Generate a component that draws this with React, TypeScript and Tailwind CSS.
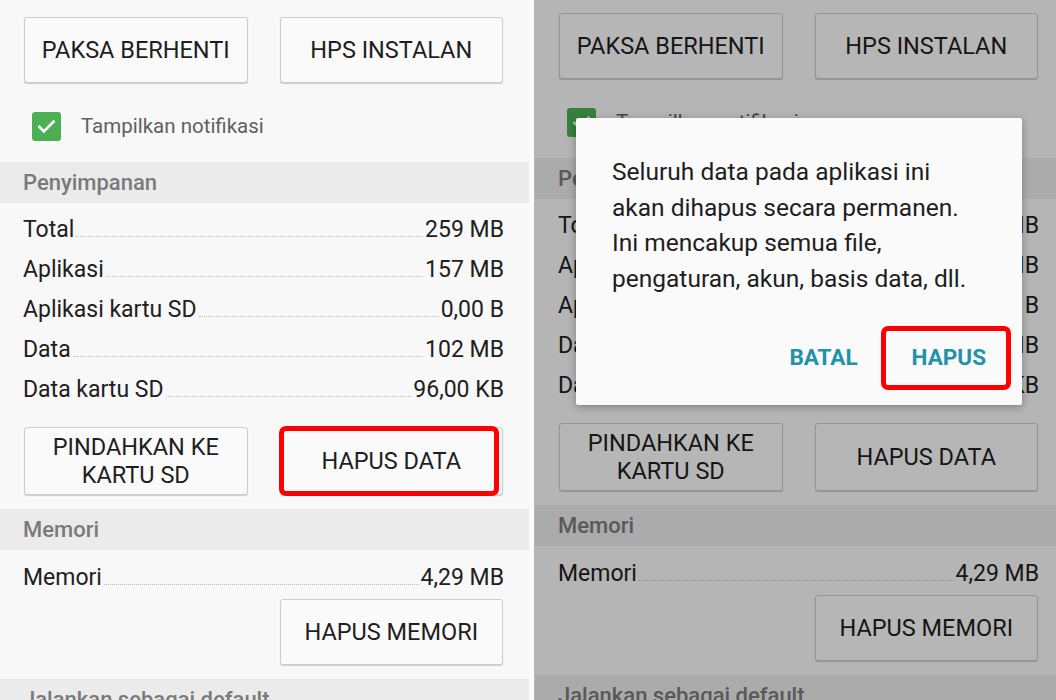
import React from 'react';

const storageRows = [
    { label: "Total", value: "259 MB" },
    { label: "Aplikasi", value: "157 MB" },
    { label: "Aplikasi kartu SD", value: "0,00 B" },
    { label: "Data", value: "102 MB" },
    { label: "Data kartu SD", value: "96,00 KB" },
];

// Red annotation frame drawn over a control
const Highlight = ({ className }: { className: string }) => (
    <span className={`pointer-events-none absolute border-[5px] border-[#ff0000] rounded-[7px] ${className}`} />
);

const ActionButton = ({ children, tall, highlight }: { children: React.ReactNode; tall?: boolean; highlight?: boolean }) => (
    <button
        className={`relative w-full ${tall ? 'h-[68px]' : 'h-[66px]'} rounded-[3px] border border-[#cdcdcd] bg-[#fafafa] shadow-[0_1px_1px_rgba(0,0,0,0.18)] text-[23.5px] leading-[28px] text-[#1e1e1e] uppercase`}
    >
        {children}
        {highlight && <Highlight className="-left-[2px] right-[3px] -top-[2px] -bottom-[2px]" />}
    </button>
);

const SizeRow = ({ label, value }: { label: string; value: string }) => (
    <div className="flex items-baseline h-[40px] pt-[5px] text-[23px] text-[#202020]">
        <span>{label}</span>
        <span className="flex-1 mx-[2px] border-b border-dotted border-[#b9b9b9]" />
        <span>{value}</span>
    </div>
);

const SectionHeader = ({ title }: { title: string }) => (
    <div className="h-[41px] bg-[#ebebeb] px-[23px] flex items-center text-[22px] font-medium text-[#7a7a7a]">
        {title}
    </div>
);

const AppInfo = ({ markClear }: { markClear?: boolean }) => (
    <div className="w-[529px] font-['Roboto','Liberation_Sans',sans-serif]">
        {/* Top actions */}
        <div className="grid grid-cols-2 gap-[32px] pl-[24px] pr-[26px] pt-[17px]">
            <ActionButton>Paksa berhenti</ActionButton>
            <ActionButton>Hps instalan</ActionButton>
        </div>

        {/* Notification toggle */}
        <div className="flex items-center h-[79px] pl-[32px] pt-[8px]">
            <span className="w-[29px] h-[29px] rounded-[3px] bg-[#4cb052] flex items-center justify-center">
                <svg width="21" height="21" viewBox="0 0 24 24" fill="none" stroke="white" strokeWidth="3" strokeLinecap="square">
                    <path d="M4 12.5l5 5L20 6.5" />
                </svg>
            </span>
            <span className="ml-[20px] text-[20.5px] leading-[29px] text-[#606060]">Tampilkan notifikasi</span>
        </div>

        <SectionHeader title="Penyimpanan" />
        <div className="pl-[23px] pr-[25px] pt-[5px]">
            {storageRows.map((row, i) => (
                <SizeRow key={i} label={row.label} value={row.value} />
            ))}
        </div>

        <div className="grid grid-cols-2 gap-[32px] pl-[24px] pr-[26px] pt-[19px] pb-[14px]">
            <ActionButton tall>Pindahkan ke<br />kartu SD</ActionButton>
            <ActionButton tall highlight={markClear}>Hapus data</ActionButton>
        </div>

        <SectionHeader title="Memori" />
        <div className="pl-[23px] pr-[25px] pt-[6px]">
            <SizeRow label="Memori" value="4,29 MB" />
        </div>
        <div className="grid grid-cols-2 gap-[32px] pl-[24px] pr-[26px] pt-[3px] pb-[14px]">
            <div />
            <ActionButton>Hapus memori</ActionButton>
        </div>

        <SectionHeader title="Jalankan sebagai default" />
    </div>
);

const App = () => {
    return (
        <div className="w-[1056px] h-[700px] overflow-hidden bg-[#fbfbfb] flex">
            {/* Before: storage screen */}
            <div className="bg-[#f8f8f8]">
                <AppInfo markClear />
            </div>

            {/* After: confirmation dialog */}
            <div className="relative ml-[5px] flex-1 overflow-hidden bg-[#f8f8f8]">
                <div className="-mt-[4px] pl-[1px]">
                    <AppInfo />
                </div>
                <div className="absolute inset-0 bg-black/[0.27]" />

                <div className="absolute left-[42px] top-[118px] w-[446px] rounded-[2px] bg-[#fafafa] shadow-[0_2px_8px_rgba(0,0,0,0.3)] font-['Roboto','Liberation_Sans',sans-serif]">
                    <p className="px-[36px] pt-[36px] text-[24.5px] leading-[35.5px] text-[#1e1e1e]">
                        Seluruh data pada aplikasi ini<br />
                        akan dihapus secara permanen.<br />
                        Ini mencakup semua file,<br />
                        pengaturan, akun, basis data, dll.
                    </p>
                    <div className="flex justify-end gap-[54px] pr-[36px] pt-[49px] pb-[36px] text-[22.5px] leading-[24px] font-bold text-[#2192a7]">
                        <span>BATAL</span>
                        <span className="relative">
                            HAPUS
                            <Highlight className="-left-[31px] -right-[25px] -top-[19px] -bottom-[21px]" />
                        </span>
                    </div>
                </div>
            </div>
        </div>
    );
};

export default App;
